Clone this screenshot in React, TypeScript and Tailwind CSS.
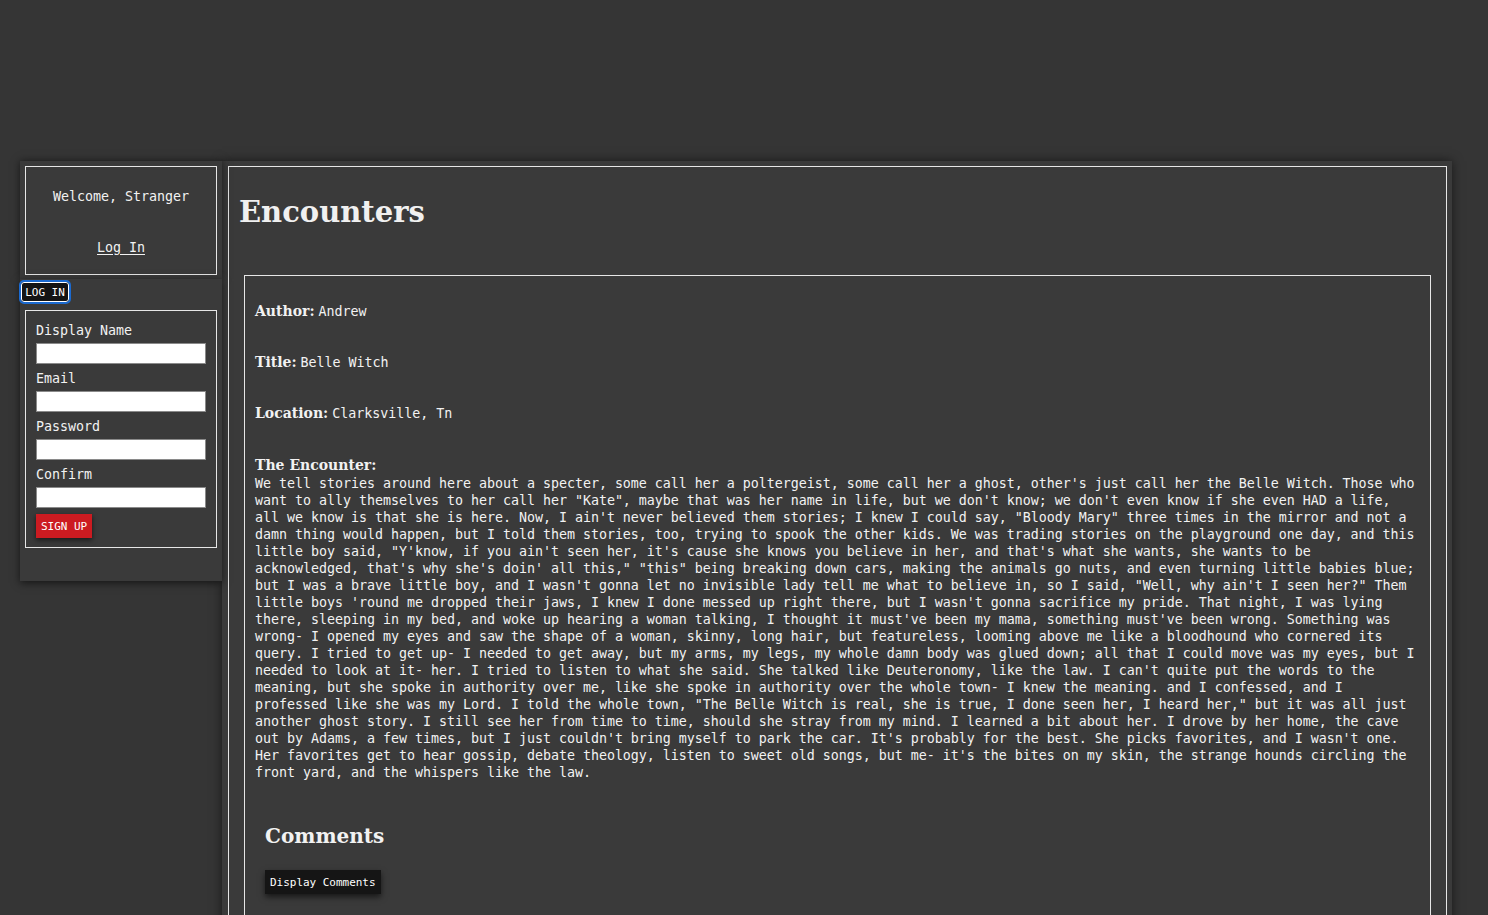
import React from 'react';

const mono = "font-['DejaVu_Sans_Mono',monospace] tracking-[-0.027px]";
const type = "font-['DejaVu_Serif',serif] font-bold tracking-normal";

const story = `We tell stories around here about a specter, some call her a poltergeist, some call her a ghost, other's just call her the Belle Witch. Those who want to ally themselves to her call her "Kate", maybe that was her name in life, but we don't know; we don't even know if she even HAD a life, all we know is that she is here. Now, I ain't never believed them stories; I knew I could say, "Bloody Mary" three times in the mirror and not a damn thing would happen, but I told them stories, too, trying to spook the other kids. We was trading stories on the playground one day, and this little boy said, "Y'know, if you ain't seen her, it's cause she knows you believe in her, and that's what she wants, she wants to be acknowledged, that's why she's doin' all this," "this" being breaking down cars, making the animals go nuts, and even turning little babies blue; but I was a brave little boy, and I wasn't gonna let no invisible lady tell me what to believe in, so I said, "Well, why ain't I seen her?" Them little boys 'round me dropped their jaws, I knew I done messed up right there, but I wasn't gonna sacrifice my pride. That night, I was lying there, sleeping in my bed, and woke up hearing a woman talking, I thought it must've been my mama, something must've been wrong. Something was wrong- I opened my eyes and saw the shape of a woman, skinny, long hair, but featureless, looming above me like a bloodhound who cornered its query. I tried to get up- I needed to get away, but my arms, my legs, my whole damn body was glued down; all that I could move was my eyes, but I needed to look at it- her. I tried to listen to what she said. She talked like Deuteronomy, like the law. I can't quite put the words to the meaning, but she spoke in authority over me, like she spoke in authority over the whole town- I knew the meaning. and I confessed, and I professed like she was my Lord. I told the whole town, "The Belle Witch is real, she is true, I done seen her, I heard her," but it was all just another ghost story. I still see her from time to time, should she stray from my mind. I learned a bit about her. I drove by her home, the cave out by Adams, a few times, but I just couldn't bring myself to park the car. It's probably for the best. She picks favorites, and I wasn't one. Her favorites get to hear gossip, debate theology, listen to sweet old songs, but me- it's the bites on my skin, the strange hounds circling the front yard, and the whispers like the law.`;

const fields = [
  { label: 'Author:', value: 'Andrew' },
  { label: 'Title:', value: 'Belle Witch' },
  { label: 'Location:', value: 'Clarksville, Tn' },
];

const signupFields = ['Display Name', 'Email', 'Password', 'Confirm'];

const App: React.FC = () => {
  return (
    <div className={`min-h-screen bg-[#353535] pt-[161px] pl-[20px] flex items-start text-[#f2f2f2] ${mono} text-[13.3333px] leading-[17px]`}>
      {/* sidebar */}
      <aside className="w-[202px] flex flex-col relative z-10">
        <div className="bg-[#3a3a3a] pt-[5px] px-[5px] pb-[4px] shadow-[0_0_8px_rgba(0,0,0,0.55)]">
          <div className="border border-[#e6e6e6] flex flex-col items-center pt-[21px] pb-[18px] gap-[34px]">
            <p>Welcome, Stranger</p>
            <a className="underline underline-offset-2 cursor-pointer">Log In</a>
          </div>
        </div>
        <div className="bg-[#3a3a3a] pb-[33px] shadow-[0_2px_8px_rgba(0,0,0,0.6)]">
          <button className="ml-[1px] mt-[3px] h-[20px] w-[48px] bg-[#141414] border border-white rounded-[3px] outline-2 outline-solid outline-[#1b6ad0] text-[11px] leading-[15px] text-white">
            LOG IN
          </button>
          <div className="mx-[5px] mt-[8px] border border-[#e6e6e6] px-[10px] pt-[11px] pb-[9px]">
            {signupFields.map((f) => (
              <div key={f}>
                <label className="block h-[17px] mb-[4px]">{f}</label>
                <input className="block w-full h-[21px] bg-white border border-[#8a8a8a] mb-[6px]" />
              </div>
            ))}
            <button className="h-[24px] px-[5px] bg-[#cc1b21] text-white text-[11px] shadow-[0_2px_5px_rgba(0,0,0,0.6)]">
              SIGN UP
            </button>
          </div>
        </div>
      </aside>

      {/* main */}
      <main className="w-[1230px] bg-[#3a3a3a] p-[5px] pl-[6px] shadow-[0_0_10px_rgba(0,0,0,0.55)]">
        <div className="border border-[#e6e6e6] px-[10px] pt-[28px] pb-[20px]">
          <h1 className={`${type} text-[29px] leading-[34px] text-[#f0f0f0]`}>Encounters</h1>
          <article className="mx-[5px] mt-[46px] border border-[#e6e6e6] px-[10px] pt-[27px] pb-[40px]">
            {fields.map((f) => (
              <div key={f.label} className="h-[17px] mb-[34px] flex items-baseline gap-[4px]">
                <span className={`${type} text-[14px]`}>{f.label}</span>
                <span>{f.value}</span>
              </div>
            ))}
            <div className={`${type} text-[14px] leading-[19px]`}>The Encounter:</div>
            <p className="w-[1164px]">{story}</p>
            <section className="px-[10px] mt-[43px]">
              <h2 className={`${type} text-[20px] leading-[24px]`}>Comments</h2>
              <button className="mt-[22px] h-[24px] px-[5px] bg-[#151515] text-white text-[11px] shadow-[0_3px_6px_rgba(0,0,0,0.6)]">
                Display Comments
              </button>
            </section>
          </article>
        </div>
      </main>
    </div>
  );
};

export default App;
